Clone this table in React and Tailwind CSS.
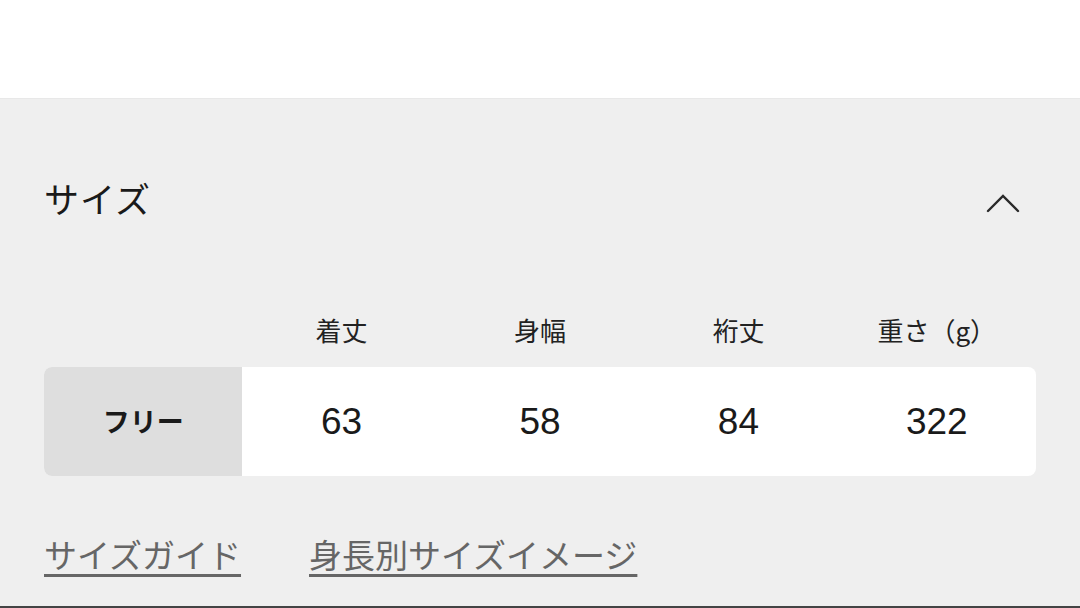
import React from 'react';

const font = { fontFamily: '"Noto Sans CJK JP", "Noto Sans", sans-serif' };

const headers = ['着丈', '身幅', '裄丈', '重さ（g）'];
const values = ['63', '58', '84', '322'];

export default function App() {
    return (
        <div className="w-[1080px] h-[608px] overflow-hidden bg-white text-[#1a1a1a]" style={font}>
            <div className="h-[98px] bg-white"></div>
            <div className="h-[510px] bg-[#efefef] border-t border-[#e8e8e8] flex flex-col">
                <div className="flex items-center justify-between pl-[44px] pr-[60px] pt-[75px]">
                    <h2 className="text-[35px] leading-[48px] tracking-[1px]">サイズ</h2>
                    <svg width="34" height="20" viewBox="0 0 34 20" fill="none" className="mt-[10px]">
                        <path d="M2 18 L17 3 L32 18" stroke="#2a2a2a" strokeWidth="2.4" strokeLinecap="round" />
                    </svg>
                </div>

                <div className="mx-[44px] mt-[91px] grid grid-cols-5">
                    <div></div>
                    {headers.map((h) => (
                        <div key={h} className="text-center text-[26px] leading-[34px] text-[#222]">{h}</div>
                    ))}
                </div>

                <div className="mx-[44px] mt-[20px] h-[109px] w-[992px] grid grid-cols-5 rounded-[8px] overflow-hidden bg-white">
                    <div className="bg-[#dedede] flex items-center justify-center text-[27px] font-bold">フリー</div>
                    {values.map((v) => (
                        <div key={v} className="flex items-center justify-center text-[37px]" style={{ fontFamily: '"Liberation Sans", sans-serif' }}>{v}</div>
                    ))}
                </div>

                <div className="flex gap-[68px] pl-[44px] mt-[58px] text-[33px] leading-[40px] text-[#666]">
                    <span className="underline decoration-[3px] underline-offset-[6px]">サイズガイド</span>
                    <span className="underline decoration-[3px] underline-offset-[6px]">身長別サイズイメージ</span>
                </div>

                <div className="mt-auto h-[2px] bg-[#444]"></div>
            </div>
        </div>
    );
}
